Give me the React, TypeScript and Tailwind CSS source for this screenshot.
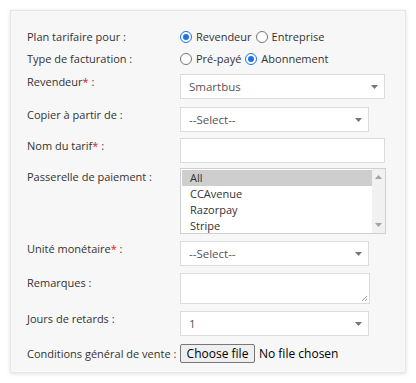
import React from 'react';

const font = { fontFamily: '"Open Sans", "Liberation Sans", sans-serif' };

function Label({ text, req, className = '' }: { text: string; req?: boolean; className?: string }) {
  return (
    <div className={`w-[153px] shrink-0 text-[11px] leading-4 text-[#333] ${className}`}>
      {text}
      {req && <span className="text-[#e02020]">*</span>} :
    </div>
  );
}

function Select({ value, width }: { value: string; width: string }) {
  return (
    <div className={`${width} h-[25px] bg-white border border-[#dcdcdc] flex items-center justify-between pl-[8px] pr-[6px] text-[11.5px] text-[#555]`}>
      <span>{value}</span>
      <svg width="7" height="4" viewBox="0 0 7 4">
        <path d="M0 0h7L3.5 4z" fill="#777" />
      </svg>
    </div>
  );
}

function Radio({ checked }: { checked?: boolean }) {
  return checked ? (
    <span className="w-[12px] h-[12px] rounded-full border border-[#1a73e8] bg-white flex items-center justify-center shrink-0">
      <span className="w-[6px] h-[6px] rounded-full bg-[#1a73e8]" />
    </span>
  ) : (
    <span className="w-[12px] h-[12px] rounded-full border border-[#767676] bg-white flex shrink-0" />
  );
}

export default function App() {
  const gateways = ['All', 'CCAvenue', 'Razorpay', 'Stripe'];
  return (
    <div className="w-[416px] h-[383px] bg-white pt-[10px] px-[10px]" style={font}>
      <div className="w-[396px] h-[363px] bg-[#f7f7f7] border border-[#e6e6e6] shadow-[0_1px_4px_rgba(0,0,0,0.12)] pl-[16px] pt-[18px]">
        <div className="flex items-center h-4">
          <Label text="Plan tarifaire pour" />
          <div className="flex items-center text-[11px] text-[#333]">
            <Radio checked />
            <span className="ml-[4px]">Revendeur</span>
            <span className="ml-[4px] flex"><Radio /></span>
            <span className="ml-[4px]">Entreprise</span>
          </div>
        </div>
        <div className="flex items-center h-4 mt-[6px]">
          <Label text="Type de facturation" />
          <div className="flex items-center text-[11px] text-[#333]">
            <Radio />
            <span className="ml-[4px]">Pré-payé</span>
            <span className="ml-[4px] flex"><Radio checked /></span>
            <span className="ml-[4px]">Abonnement</span>
          </div>
        </div>

        <div className="flex mt-[7px]">
          <Label text="Revendeur" req />
          <Select value="Smartbus" width="w-[205px]" />
        </div>
        <div className="flex mt-[8px]">
          <Label text="Copier à partir de" />
          <Select value="--Select--" width="w-[189px]" />
        </div>
        <div className="flex mt-[6px]">
          <Label text="Nom du tarif" req />
          <div className="w-[205px] h-[25px] bg-white border border-[#dcdcdc]" />
        </div>
        <div className="flex mt-[5px]">
          <Label text="Passerelle de paiement" className="pt-[1px]" />
          <div className="w-[206px] h-[66px] bg-white border border-[#cfcfcf] flex text-[11px] text-[#333]">
            <div className="flex-1 pt-[1px] pl-[1px]">
              {gateways.map((g, i) => (
                <div key={g} className={`h-[16px] leading-4 pl-[8px] ${i === 0 ? 'bg-[#cecece]' : ''}`}>
                  {g}
                </div>
              ))}
            </div>
            <div className="w-[13px] bg-[#f1f1f1] flex flex-col justify-between items-center py-[6px]">
              <svg width="7" height="4" viewBox="0 0 7 4">
                <path d="M0 4h7L3.5 0z" fill="#a3a3a3" />
              </svg>
              <svg width="7" height="4" viewBox="0 0 7 4">
                <path d="M0 0h7L3.5 4z" fill="#a3a3a3" />
              </svg>
            </div>
          </div>
        </div>
        <div className="flex mt-[7px]">
          <Label text="Unité monétaire" req />
          <Select value="--Select--" width="w-[189px]" />
        </div>
        <div className="flex mt-[7px]">
          <Label text="Remarques" className="pt-[2px]" />
          <div className="w-[190px] h-[31px] bg-white border border-[#dcdcdc] relative">
            <svg className="absolute right-[1px] bottom-[1px]" width="7" height="7" viewBox="0 0 7 7">
              <path d="M6 1L1 6M6 4L4 6" stroke="#999" strokeWidth="1" />
            </svg>
          </div>
        </div>
        <div className="flex mt-[7px]">
          <Label text="Jours de retards" />
          <Select value="1" width="w-[189px]" />
        </div>
        <div className="flex items-center mt-[8px]">
          <Label text="Conditions général de vente" />
          <div className="flex items-center text-[12px] text-black">
            <div className="w-[75px] h-[19px] border border-[#767676] rounded-[2px] bg-[#efefef] flex items-center justify-center">
              Choose file
            </div>
            <span className="ml-[4px]">No file chosen</span>
          </div>
        </div>
      </div>
    </div>
  );
}
